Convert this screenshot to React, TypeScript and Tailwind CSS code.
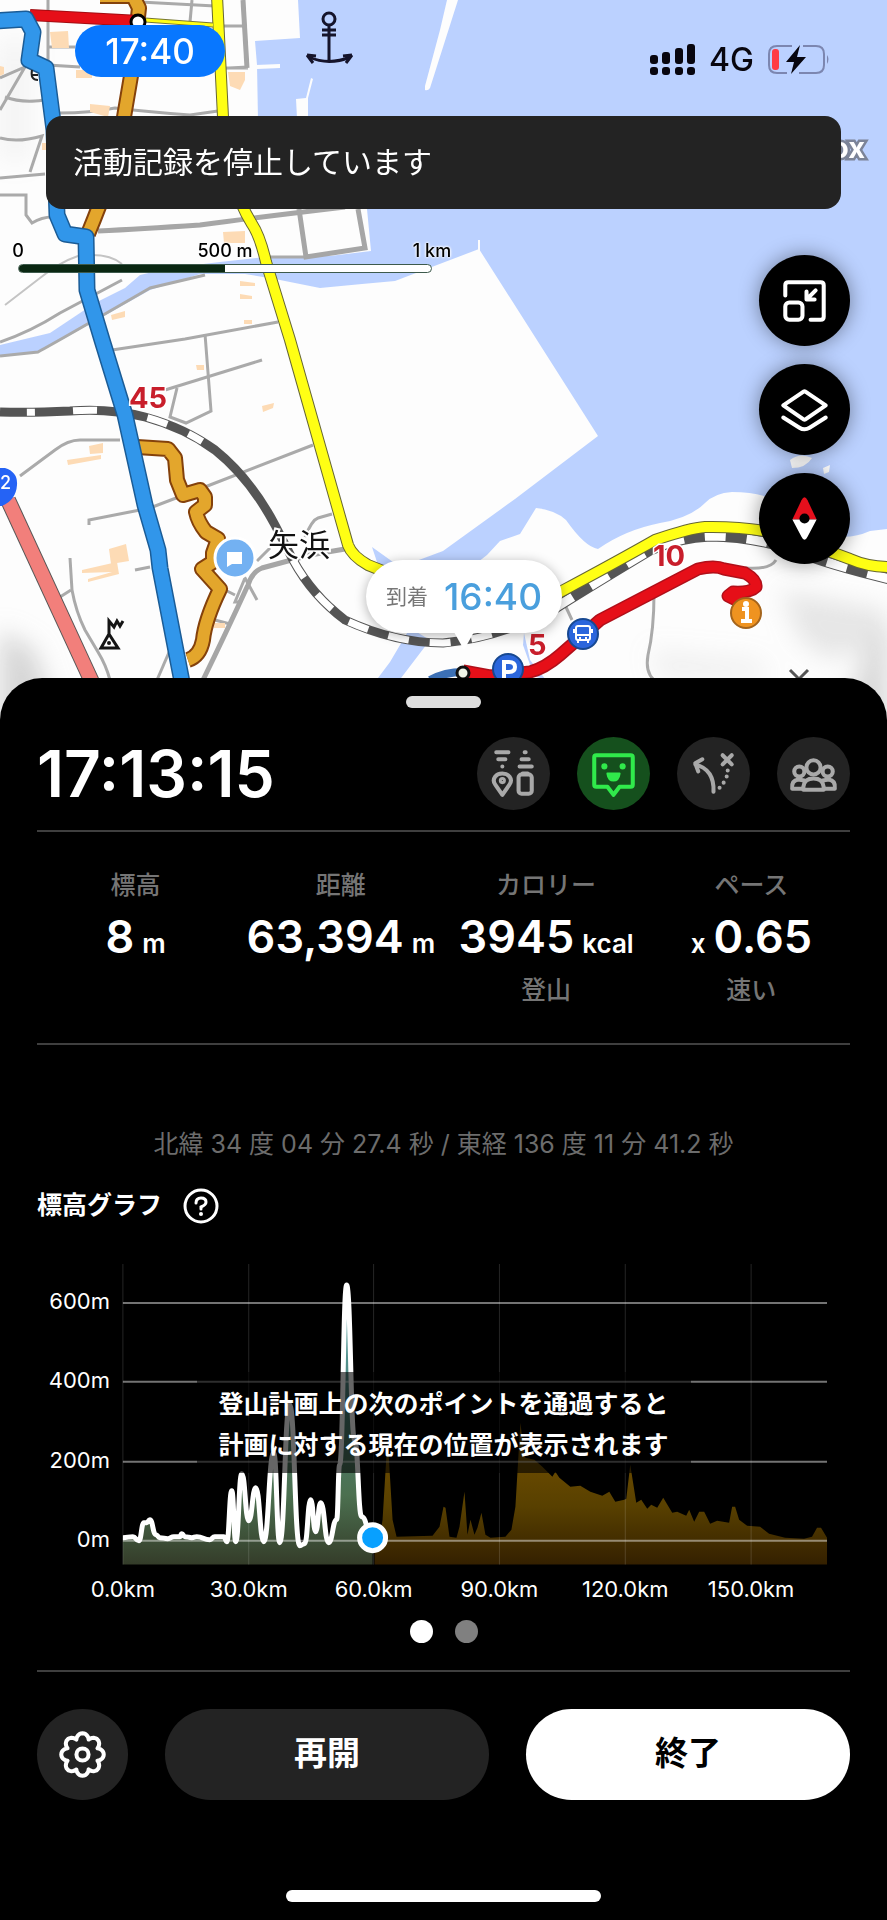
import type { ReactNode } from "react";

type Point = [number, number];

const ROADS = [
  "M48 0V65L80 67",
  "M48 47H75",
  "M192 0L190 22",
  "M140 2L215 6M222 26H245",
  "M225 68H248M210 69L248 67",
  "M0 78L25 67L0 110",
  "M5 97Q18 102 35 101T50 96",
  "M60 113Q90 113 115 108Q150 112 190 115L218 111",
  "M0 138Q18 143 42 136L30 172",
  "M0 178L45 174",
  "M0 195H26V215L32 223Q42 217 52 217",
  "M305 257H262",
  "M0 342Q30 332 60 313L122 280",
  "M0 356L38 352Q60 340 150 288L205 275",
  "M112 350L185 339L278 322",
  "M205 334L211 411L186 423L170 417L177 388",
  "M165 390L262 360",
  "M20 476L55 450Q68 440 80 440H120",
  "M89 525V520L150 508L210 485L313 445",
  "M70 558L72 590Q76 612 85 630L98 652Q106 665 110 680",
  "M60 597L71 590M135 570L150 567",
  "M157 680L170 650",
  "M257 600L245 578L235 602H241M225 590L235 595M215 620L230 624",
  "M257 561L270 548M305 537Q312 520 318 518L332 514M325 552L345 549",
  "M654 594Q654 630 648 655Q645 672 654 680",
  "M565 605L572 620M745 568Q770 570 776 560",
];

const MAJOR_ROADS = [
  "M98 231Q140 229 200 225Q260 217 345 207",
  "M299 209L306 257L365 248L358 209",
  "M203 680Q225 635 248 585Q252 572 262 568L310 555L345 549",
  "M243 0L247 68",
];

const BUILDINGS = [
  "M50 32L68 31L69 48H52Z",
  "M90 104L110 106L108 117L90 112Z",
  "M228 72H245V80L240 90L230 86Z",
  "M223 232L245 231V243H224Z",
  "M76 70H92V78H76Z",
  "M240 281L255 283V286H240ZM240 294L252 296V299H240ZM244 320H252V324H244Z",
  "M111 315L125 311V317L112 320Z",
  "M89 446L103 443V453L90 454Z",
  "M67 460L101 455V459L68 465Z",
  "M109 549L126 544L129 561L111 564Z",
  "M82 570L117 562L119 574L88 582V579L112 572L82 573Z",
  "M262 406L274 403L273 408L263 412Z",
  "M196 365H204V370H197ZM213 623H225V628H214Z",
  "M0 66L4 67V74L0 76ZM42 143H48V150H42Z",
];

const YELLOW_ROAD =
  "M217 -4L223 117C227 175 240 205 252 224Q260 236 266 262L290 340L348 545Q352 556 368 565L388 573M540 602L562 591Q620 560 655 540Q690 528 705 527Q760 526 800 540Q825 550 850 559Q868 567 890 567";

const BLUE_ROUTE =
  "M-6 21L26 19L33 32L29 60L46 68L54 130L57 215L65 234L86 237L87 290L102 340L125 415L145 505L158 550L160 568L182 682";

const RED_ROUTE =
  "M463 671L490 676L530 672Q545 668 560 655L600 620L698 569Q715 565 724 569L745 573Q757 580 756 587Q750 593 733 592L728 596L748 606";

const ORANGE_ROUTE =
  "M100 -4L133 -4L139 8L132 70L124 117C116 165 100 205 88 234M137 447L168 449L175 458L177 480L183 495L200 490L205 497L205 505L196 512Q198 522 206 532L218 539L213 553V562L202 569L220 589Q205 620 203 640Q200 656 188 660";

// The railway is cut in three: the dash rhythm differs west of the town,
// through it, and along the coast.
const TRACK_WEST = "M0 412Q30 413 70 411Q110 408 145 417Q185 428 215 450Q250 478 275 525L293 560";
const TRACK_SOUTH = "M293 560Q312 595 345 620Q395 643 443 643Q500 638 555 608";
const TRACK_COAST = "M555 608Q595 583 650 550Q680 537 710 536Q750 536 790 549Q830 565 890 579";

function Map(): React.JSX.Element {
  return (
    <svg
      className="absolute inset-0 h-full w-full"
      viewBox="0 0 887 728"
      preserveAspectRatio="xMidYMin slice"
      fill="none"
      aria-hidden="true"
    >
      <defs>
        <filter id="soft">
          <feGaussianBlur stdDeviation="12" />
        </filter>
      </defs>
      <rect width="887" height="728" fill="#fdfdfd" />
      <g filter="url(#soft)" fill="#bcbcbc">
        <path d="M0 630L35 650L60 728H0Z" opacity=".6" />
        <path d="M780 590L887 610V640L830 660L800 640Z" opacity=".35" />
        <path d="M870 640L887 630V728H840Z" opacity=".6" />
        <path d="M650 650L760 660L770 680H660Z" opacity=".2" />
        <path d="M0 40H30V160H0Z" opacity=".15" />
      </g>

      <g fill="#bbd1ff">
        <path d="M298 0L300 38L255 41L257 65L258 120L350 200L367 209L371 251L330 256H275L220 262L170 268L140 275L125 288L95 303L50 333L0 345V356L38 352L65 338L150 290L200 274H245L275 279L320 288L362 284L395 281L479 249L598 436L515 499L443 551L400 567L372 547L378 565L430 600L487 555L500 541L520 534L536 508Q555 510 566 520Q585 547 598 549Q625 530 660 523Q690 518 705 503Q715 493 732 492Q755 492 770 498L830 535Q850 540 870 531L887 529V0Z" />
        <path d="M410 628L430 640L398 682H375L390 662Z" />
        <path d="M524 633L530 660L546 680L534 676L523 645Z" />
      </g>
      <g fill="#fdfdfd">
        <path d="M256 65L280 64V68L257 69Z" />
        <path d="M296 99L306 98L311 78L313 79L308 98V118H297Z" />
        <path d="M447 0H458L430 88Q428 91 425 90V86L440 30Z" />
        <path d="M478 240H480V252H478Z" />
        <path d="M790 460Q800 452 812 458Q806 468 792 468ZM823 468L830 465L829 472L824 474Z" />
      </g>

      <path d="M5 305L40 278Q60 262 78 256Q108 252 122 264" stroke="#c4c4c4" strokeWidth="2" />
      <g stroke="#aaa" strokeWidth="3">
        {ROADS.map((d) => (
          <path key={d} d={d} />
        ))}
      </g>
      <g stroke="#a6a6a6" strokeWidth="5">
        {MAJOR_ROADS.map((d) => (
          <path key={d} d={d} />
        ))}
      </g>
      <g fill="#fddbb5">
        {BUILDINGS.map((d) => (
          <path key={d} d={d} />
        ))}
      </g>

      <path d={TRACK_WEST} stroke="#555" strokeWidth="9" />
      <path d={TRACK_WEST} stroke="#fff" strokeWidth="7" strokeDasharray="0 27 8 38 24 51 21 23 16 300" />
      <path d={TRACK_SOUTH} stroke="#555" strokeWidth="9" />
      <path d={TRACK_SOUTH} stroke="#fff" strokeWidth="7" strokeDasharray="21 21" />
      <path d={TRACK_COAST} stroke="#555" strokeWidth="11" />
      <path d={TRACK_COAST} stroke="#fff" strokeWidth="9" strokeDasharray="21 21" />

      <path d="M8 500L92 682" stroke="#555" strokeWidth="16" />
      <path d="M8 500L92 682" stroke="#f27f7b" strokeWidth="14" />
      <path d={YELLOW_ROAD} stroke="#666633" strokeWidth="12" />
      <path d={YELLOW_ROAD} stroke="#ffff14" strokeWidth="10" />
      <path d="M145 20L213 25" stroke="#777733" strokeWidth="5" />
      <path d="M145 20L213 25" stroke="#ffff14" strokeWidth="3" />

      <g strokeLinejoin="round">
        <path d={ORANGE_ROUTE} stroke="#84410b" strokeWidth="16" />
        <path d={ORANGE_ROUTE} stroke="#e3a62c" strokeWidth="12" />
        <path d="M30 15L140 21" stroke="#a30d12" strokeWidth="12" />
        <path d="M30 15L140 21" stroke="#e60f18" strokeWidth="10" />
        <path d={BLUE_ROUTE} stroke="#1b5c96" strokeWidth="17" />
        <path d={BLUE_ROUTE} stroke="#3196ea" strokeWidth="14" />
        <path d={RED_ROUTE} stroke="#b0101a" strokeWidth="13" />
        <path d={RED_ROUTE} stroke="#e60f18" strokeWidth="10" />
        <path d="M430 680Q445 672 463 672" stroke="#3c70b5" strokeWidth="8" />
      </g>

      <circle cx="138" cy="22" r="7" fill="#fff" stroke="#000" strokeWidth="3" />
      <circle cx="463" cy="673" r="6" fill="#f1f5e8" stroke="#111" strokeWidth="3" />
      <path d="M32 70Q30 80 38 80M31 75H38" stroke="#222" strokeWidth="2" />

      {/* harbour and survey marks */}
      <g stroke="#15142b" strokeWidth="3">
        <circle cx="329" cy="19" r="6" />
        <path d="M329 25V61M322 30H336M322 35H336M309 57Q329 66 350 57" />
        <path d="M307 55L316 56M307 55L313 63M352 55L343 56M352 55L346 63" />
      </g>
      <g stroke="#151515" strokeWidth="3">
        <path d="M109 634L101 648H118L109 634V621L114 627L117 621L120 626L123 621" />
        <circle cx="109" cy="643" r="1" strokeWidth="2" />
      </g>
      <path d="M790 670L799 679L808 670" stroke="#555" strokeWidth="3" />

      <path d="M-14 480Q-10 467 5 468Q18 472 17 485Q16 500 2 506H-14Z" fill="#2563f5" />

      <g className="font-['Inter',sans-serif]">
        <text x="0" y="489" fontSize="18" fontWeight="500" fill="#fff">2</text>
        <g fontSize="29" fontWeight="700" fill="#c81e2b" stroke="#fff" strokeWidth="3" paintOrder="stroke">
          <text x="129" y="408">45</text>
          <text x="653" y="566">10</text>
          <text x="528" y="655">5</text>
        </g>
        <text x="831" y="158" fontSize="29" fontWeight="700" fill="#fff" stroke="#7c8498" strokeWidth="5" paintOrder="stroke">ox</text>
      </g>
      <text
        x="268"
        y="556"
        fontSize="31"
        fill="#111"
        stroke="#fff"
        strokeWidth="4"
        paintOrder="stroke"
        className="font-['Noto_Sans_CJK_JP',sans-serif]"
      >
        矢浜
      </text>

      {/* pins */}
      <circle cx="235" cy="558" r="20" fill="#73b1f2" stroke="#fff" strokeWidth="3" />
      <path d="M227 552H242V564H232L227 567Z" fill="#fff" />
      <circle cx="508" cy="669" r="15" fill="#2b66dc" stroke="#174891" strokeWidth="2" />
      <path d="M504 678V662H509Q515 662 515 667T509 672H504" stroke="#fff" strokeWidth="4" />
      <circle cx="583" cy="634" r="15" fill="#2b66dc" stroke="#174891" strokeWidth="2" />
      <g stroke="#fff" strokeWidth="2">
        <rect x="576" y="626" width="14" height="14" rx="2" />
        <path d="M576 635H590M574 629V633M592 629V633M578 640V643M588 640V643M579 638H581M585 638H587" />
      </g>
      <circle cx="746" cy="613" r="15" fill="#ef9320" stroke="#a4641c" strokeWidth="2" />
      <path d="M742 609H747V620M741 621H752" stroke="#fff" strokeWidth="4" />
      <circle cx="746" cy="604" r="3" fill="#fff" />
    </svg>
  );
}

function StatusBar(): React.JSX.Element {
  return (
    <div className="flex h-[52px] items-center justify-between pl-[75px] pr-[57px]">
      <span className="flex h-full w-[150px] items-center justify-center rounded-full bg-[#0877ff] text-[35px] font-medium text-white">
        17:40
      </span>
      <div className="flex items-center gap-3.5 pt-[18px] text-[#08060f]">
        <svg width="45" height="32" viewBox="0 0 45 32" fill="currentColor" aria-label="電波">
          <rect x="0" y="11" width="8" height="9" rx="3" />
          <rect x="12" y="8" width="8" height="12" rx="3" />
          <rect x="25" y="4" width="8" height="16" rx="3" />
          <rect x="37" y="0" width="8" height="20" rx="3" />
          <rect x="0" y="23" width="8" height="8" rx="3" />
          <rect x="12" y="23" width="8" height="8" rx="3" />
          <rect x="25" y="23" width="8" height="8" rx="3" />
          <rect x="37" y="23" width="8" height="8" rx="3" />
        </svg>
        <span className="text-[32px] font-medium leading-8">4G</span>
        <svg width="62" height="32" viewBox="0 0 62 32" fill="none" aria-label="バッテリー">
          <path
            d="M24 2H9Q1 2 1 10V21Q1 29 9 29H19M35 2H48Q56 2 56 10V21Q56 29 48 29H31"
            stroke="#7c86b0"
            strokeWidth="2"
          />
          <path d="M59 11Q62 15 59 20Z" fill="#7c86b0" />
          <rect x="4" y="5" width="7" height="21" rx="3" fill="#ff3b44" />
          <path d="M32 1L18 18H26L23 30L38 13H29Z" fill="#08060f" />
        </svg>
      </div>
    </div>
  );
}

function ScaleBar(): React.JSX.Element {
  return (
    <div className="ml-[18px] mt-8 w-[414px]">
      <div className="-mx-8 flex justify-between text-lg font-medium leading-5 text-black [text-shadow:0_0_3px_#fff,0_0_3px_#fff,0_0_2px_#fff]">
        <span className="w-16 text-center">0</span>
        <span className="w-16 whitespace-nowrap text-center">500 m</span>
        <span className="w-16 text-center">1 km</span>
      </div>
      <div className="mt-[3px] flex h-[9px] overflow-hidden rounded-full border border-[#3d5a4c] bg-white">
        <div className="w-1/2 bg-[#0a2712]" />
      </div>
    </div>
  );
}

function MapButton({ label, children }: { label: string; children: ReactNode }): React.JSX.Element {
  return (
    <button
      type="button"
      aria-label={label}
      className="h-[91px] w-[91px] rounded-full bg-black shadow-[0_0_20px_rgba(0,0,0,0.4)]"
    >
      <svg viewBox="0 0 90 90" fill="none" stroke="#fff" strokeWidth="4" strokeLinecap="round" strokeLinejoin="round">
        {children}
      </svg>
    </button>
  );
}

function MapControls(): React.JSX.Element {
  return (
    <div className="absolute right-[37px] top-[255px] flex flex-col gap-[18px]">
      <MapButton label="縮小表示">
        <path d="M26 40V30Q26 27 29 27H61Q64 27 64 30V61Q64 64 61 64H51" />
        <rect x="26" y="47" width="17" height="17" rx="4" />
        <path d="M56 35L48 43M47 36V44H55" />
      </MapButton>
      <MapButton label="レイヤー">
        <path d="M43 28Q45 26 47 28L66 41L47 54Q45 56 43 54L24 41Z" />
        <path d="M24 53L40 63Q45 66 50 63L66 53" />
      </MapButton>
      <MapButton label="コンパス">
        <path d="M33 46L42 27Q45 21 48 27L57 46Z" fill="#e50f1c" stroke="none" />
        <path d="M33 46L42 63Q45 69 48 63L57 46Z" fill="#fff" stroke="none" />
        <circle cx="45" cy="45" r="5" fill="#000" stroke="none" />
      </MapButton>
    </div>
  );
}

function ArrivalCallout(): React.JSX.Element {
  return (
    <div className="absolute left-[366px] top-[560px] flex h-[73px] w-[196px] items-center justify-center gap-4 rounded-full bg-white shadow-[0_2px_12px_rgba(0,0,0,0.3)]">
      <span className="text-[21px] text-[#777]">到着</span>
      <span className="text-[37px] font-medium text-[#4a9fdd]">16:40</span>
      <svg className="absolute left-[88px] top-[72px]" width="20" height="18" viewBox="0 0 20 18" aria-hidden="true">
        <path d="M0 0H20L10 18Z" fill="#fff" />
      </svg>
    </div>
  );
}

function RoundToggle({
  label,
  active = false,
  children,
}: {
  label: string;
  active?: boolean;
  children: ReactNode;
}): React.JSX.Element {
  return (
    <button
      type="button"
      aria-label={label}
      aria-pressed={active}
      className={`h-[73px] w-[73px] rounded-full ${active ? "bg-[#15501d] text-[#30ea4b]" : "bg-[#232323] text-[#a9a9a9]"}`}
    >
      <svg
        viewBox="0 0 72 72"
        fill="none"
        stroke="currentColor"
        strokeWidth="4"
        strokeLinecap="round"
        strokeLinejoin="round"
      >
        {children}
      </svg>
    </button>
  );
}

function SheetHeader(): React.JSX.Element {
  return (
    <header className="mt-[29px] flex items-center justify-between">
      <h1 className="text-[64px] font-semibold leading-[73px]">17:13:15</h1>
      <div className="flex gap-[27px]">
        <RoundToggle label="すれ違い通信">
          <path d="M19 15H31M21 22H28M25 29H25M47 15H48M44 22H51M42 29H54" />
          <path d="M25 57L18 47Q15 43 18 39Q20 36 25 36T32 39Q35 43 32 47Z" />
          <circle cx="25" cy="43" r="2" strokeWidth="3" />
          <rect x="41" y="37" width="13" height="19" rx="3" />
          <path d="M45 36H50" />
        </RoundToggle>
        <RoundToggle label="見守り" active>
          <path d="M19 18H53Q55 18 55 20V47Q55 49 53 49H42L36 57L30 49H19Q17 49 17 47V20Q17 18 19 18Z" />
          <path d="M30 36H42Q41 43 36 43T30 36Z" fill="currentColor" strokeWidth="2" />
          <circle cx="27" cy="29" r="3" fill="currentColor" stroke="none" />
          <circle cx="45" cy="29" r="3" fill="currentColor" stroke="none" />
        </RoundToggle>
        <RoundToggle label="ルート外れ警告">
          <path d="M36 54Q37 32 18 27M25 22L18 26L21 34" />
          <path d="M45 18L54 27M54 18L45 27" />
          <path d="M50 33H50M49 39H49M46 45H46M42 50H42" />
        </RoundToggle>
        <RoundToggle label="仲間">
          <circle cx="36" cy="30" r="7" />
          <circle cx="22" cy="34" r="5" />
          <circle cx="50" cy="34" r="5" />
          <path d="M26 52V49Q27 41 36 41T46 49V52Z" />
          <path d="M26 51H15Q14 43 21 42L27 43M46 51H57Q58 43 51 42L45 43" />
        </RoundToggle>
      </div>
    </header>
  );
}

interface Stat {
  label: string;
  value: string;
  prefix?: string;
  unit?: string;
  note?: string;
}

const STATS: Stat[] = [
  { label: "標高", value: "8", unit: "m" },
  { label: "距離", value: "63,394", unit: "m" },
  { label: "カロリー", value: "3945", unit: "kcal", note: "登山" },
  { label: "ペース", value: "0.65", prefix: "x", note: "速い" },
];

function Stats(): React.JSX.Element {
  return (
    <dl className="-mx-1 grid h-[211px] grid-cols-4 pt-[35px] text-center">
      {STATS.map((stat) => (
        <div key={stat.label}>
          <dt className="text-[25px] font-medium leading-9 text-[#757575]">{stat.label}</dt>
          <dd className="mt-1.5 flex items-baseline justify-center gap-2 whitespace-nowrap text-[26px] font-semibold leading-[56px]">
            {stat.prefix && <span>{stat.prefix}</span>}
            <span className="text-[45px]">{stat.value}</span>
            {stat.unit && <span>{stat.unit}</span>}
          </dd>
          {stat.note && <dd className="text-[25px] font-medium leading-9 text-[#757575]">{stat.note}</dd>}
        </div>
      ))}
    </dl>
  );
}

const COORDINATES = [
  "北緯", "34", "度", "04", "分", "27.4", "秒", "/",
  "東経", "136", "度", "11", "分", "41.2", "秒",
];

// Heights already walked, then the rest of the plan, in chart units.
const WALKED: Point[] = [
  [86, 278], [96, 277], [102, 281], [107, 263], [110, 263], [113, 260], [119, 275], [123, 278],
  [131, 279], [137, 277], [143, 277], [145, 274], [148, 277], [155, 278], [160, 277], [173, 280],
  [178, 277], [187, 277], [190, 282], [195, 231], [199, 282], [205, 214], [212, 261], [219, 228],
  [227, 282], [237, 193], [243, 283], [253, 145], [263, 286], [268, 284], [274, 240], [279, 272],
  [284, 243], [292, 283], [300, 260], [303, 205], [310, 25], [318, 180], [325, 257], [336, 279],
];

const PLANNED: Point[] = [
  [338, 279], [343, 278], [346, 260], [351, 177], [356, 260], [360, 277], [396, 276], [403, 267],
  [407, 247], [409, 248], [413, 277], [420, 278], [423, 267], [428, 232], [431, 275], [434, 260],
  [438, 275], [441, 268], [445, 253], [449, 275], [454, 278], [469, 277], [475, 270], [479, 247],
  [481, 213], [484, 163], [487, 187], [489, 198], [498, 200], [506, 207], [516, 217], [519, 212],
  [523, 218], [534, 227], [544, 226], [554, 232], [566, 236], [573, 232], [579, 242], [588, 240],
  [590, 239], [594, 205], [600, 243], [605, 240], [611, 249], [615, 245], [621, 248], [627, 238],
  [636, 253], [641, 252], [650, 256], [653, 250], [658, 262], [663, 252], [668, 252], [674, 264],
  [681, 261], [693, 263], [696, 247], [699, 247], [703, 260], [711, 266], [724, 267], [733, 274],
  [749, 278], [768, 279], [776, 277], [781, 268], [785, 268], [791, 278],
];

const ALTITUDES = [
  { label: "600m", y: 43 },
  { label: "400m", y: 122 },
  { label: "200m", y: 202 },
  { label: "0m", y: 281 },
];

const DISTANCES = [
  { label: "0.0km", x: 86 },
  { label: "30.0km", x: 212 },
  { label: "60.0km", x: 337 },
  { label: "90.0km", x: 463 },
  { label: "120.0km", x: 589 },
  { label: "150.0km", x: 715 },
];

function smoothPath(points: Point[]): string {
  return points.reduce((d, [x, y], i) => {
    if (i === 0) return `M${x} ${y}`;
    const [px, py] = points[i - 1];
    const mid = (px + x) / 2;
    return `${d}C${mid} ${py} ${mid} ${y} ${x} ${y}`;
  }, "");
}

function linePath(points: Point[]): string {
  return "M" + points.map((p) => p.join(" ")).join("L");
}

function ElevationChart(): React.JSX.Element {
  const walked = smoothPath(WALKED);
  return (
    <div className="relative mt-9">
      <svg viewBox="0 0 814 346" className="block w-full" role="img" aria-label="標高グラフ">
        <defs>
          <linearGradient id="walked" gradientUnits="userSpaceOnUse" x1="0" y1="25" x2="0" y2="305">
            <stop offset="0" stopColor="#66b5b8" />
            <stop offset=".4" stopColor="#4a8078" />
            <stop offset=".75" stopColor="#4c7050" />
            <stop offset="1" stopColor="#343c29" />
          </linearGradient>
          <linearGradient id="planned" gradientUnits="userSpaceOnUse" x1="0" y1="160" x2="0" y2="305">
            <stop offset="0" stopColor="#7a5400" />
            <stop offset=".6" stopColor="#584000" />
            <stop offset="1" stopColor="#342000" />
          </linearGradient>
        </defs>
        <path d={`${linePath(PLANNED)}V305H338Z`} fill="url(#planned)" />
        <path d={`${walked}V305H86Z`} fill="url(#walked)" />
        <g stroke="#fff">
          {ALTITUDES.map(({ label, y }) => (
            <path key={label} d={`M86 ${y}H791`} strokeOpacity=".45" strokeWidth="2" />
          ))}
          {DISTANCES.map(({ label, x }) => (
            <path key={label} d={`M${x} 4V305`} strokeOpacity=".15" />
          ))}
        </g>
        <path d={walked} fill="none" stroke="#fff" strokeWidth="5" strokeLinejoin="round" />
        <g fill="#fff" fontSize="22" className="font-['Inter',sans-serif]">
          {ALTITUDES.map(({ label, y }) => (
            <text key={label} x="73" y={y + 6} textAnchor="end">{label}</text>
          ))}
          {DISTANCES.map(({ label, x }) => (
            <text key={label} x={x} y="337" textAnchor="middle">{label}</text>
          ))}
        </g>
        <circle cx="336" cy="278" r="13" fill="#08a0ff" stroke="#fff" strokeWidth="5" />
      </svg>
      <p className="absolute left-1/2 top-[112px] flex h-[101px] w-[494px] -translate-x-1/2 items-center justify-center whitespace-nowrap bg-black/60 pt-1 text-center text-[25px] font-bold leading-[41px]">
        登山計画上の次のポイントを通過すると
        <br />
        計画に対する現在の位置が表示されます
      </p>
    </div>
  );
}

function gearPath(): string {
  const steps = 96;
  const points = Array.from({ length: steps }, (_, i) => {
    const angle = (i / steps) * Math.PI * 2;
    const r = 16 + 5 * Math.pow(Math.abs(Math.cos(angle * 4)), 0.8);
    return `${(45 + r * Math.sin(angle)).toFixed(1)} ${(45 - r * Math.cos(angle)).toFixed(1)}`;
  });
  return `M${points.join("L")}Z`;
}

function ActionBar(): React.JSX.Element {
  return (
    <div className="mt-[37px] flex gap-[37px]">
      <button type="button" aria-label="設定" className="h-[91px] w-[91px] shrink-0 rounded-full bg-[#232323]">
        <svg viewBox="0 0 90 90" fill="none" stroke="#fff" strokeWidth="4" strokeLinejoin="round">
          <path d={gearPath()} />
          <circle cx="45" cy="45" r="6" />
        </svg>
      </button>
      <button type="button" className="h-[91px] flex-1 rounded-full bg-[#232323] text-[33px] font-bold">
        再開
      </button>
      <button type="button" className="h-[91px] flex-1 rounded-full bg-white text-[33px] font-bold text-black">
        終了
      </button>
    </div>
  );
}

export default function App(): React.JSX.Element {
  return (
    <main className="bg-black font-['Inter','Noto_Sans_CJK_JP',sans-serif] text-white">
      <section className="relative h-[728px] overflow-hidden pt-[25px]">
        <Map />
        <div className="relative">
          <StatusBar />
          <p
            role="status"
            className="mx-[46px] mt-[39px] flex h-[93px] items-center rounded-2xl bg-[#232323] px-[27px] text-[30px]"
          >
            活動記録を停止しています
          </p>
          <ScaleBar />
        </div>
        <ArrivalCallout />
        <MapControls />
      </section>

      <section className="relative -mt-[50px] rounded-t-[42px] bg-black px-[37px] pb-[18px] pt-[18px]">
        <div className="mx-auto h-3 w-[75px] rounded-full bg-[#dedede]" />
        <SheetHeader />
        <hr className="mt-5 border-t-2 border-[#3f3f3f]" />
        <Stats />
        <hr className="border-t-2 border-[#3f3f3f]" />
        <p className="mt-[81px] flex justify-center gap-[7px] text-[25px] leading-9 text-[#6c6c6c]">
          {COORDINATES.map((part, i) => (
            <span key={i}>{part}</span>
          ))}
        </p>
        <div className="mt-[26px] flex h-9 items-center gap-[21px]">
          <h2 className="text-[25px] font-bold">標高グラフ</h2>
          <button type="button" aria-label="標高グラフのヘルプ">
            <svg width="36" height="36" viewBox="0 0 36 36" fill="none" stroke="#fff" strokeWidth="3" strokeLinecap="round">
              <circle cx="18" cy="18" r="16" />
              <path d="M13 15Q13 10 18 10T23 14Q23 17 18 19V21" />
              <path d="M18 26H18" strokeWidth="4" />
            </svg>
          </button>
        </div>
        <ElevationChart />
        <div className="mt-3.5 flex justify-center gap-[22px]">
          <button type="button" aria-label="1ページ目" className="h-[23px] w-[23px] rounded-full bg-white" />
          <button type="button" aria-label="2ページ目" className="h-[23px] w-[23px] rounded-full bg-[#808080]" />
        </div>
        <hr className="mt-[27px] border-t-2 border-[#3f3f3f]" />
        <ActionBar />
        <div className="mx-auto mt-[90px] h-3 w-[315px] rounded-full bg-white" />
      </section>
    </main>
  );
}
